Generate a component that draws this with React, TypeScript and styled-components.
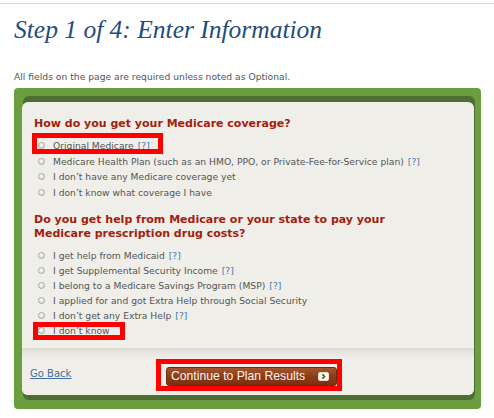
import styled, { createGlobalStyle } from 'styled-components';

const GlobalStyle = createGlobalStyle`
  html, body {
    margin: 0;
    padding: 0;
    background: #fff;
  }
`;

const TopRule = styled.div`
  margin-top: 3px;
  height: 1px;
  background: #dadada;
`;

const Page = styled.div`
  padding: 0 13px 0 14px;
  font-family: 'DejaVu Sans', Verdana, sans-serif;
`;

const Title = styled.h1`
  margin: 11px 0 0;
  font-family: 'Liberation Serif', Georgia, serif;
  font-style: italic;
  font-weight: normal;
  font-size: 25.5px;
  line-height: 30px;
  color: #1f4d7b;
`;

const Note = styled.p`
  margin: 26px 0 5px;
  font-size: 9.2px;
  line-height: 12px;
  color: #555;
`;

const Frame = styled.div`
  width: 467px;
  box-sizing: border-box;
  padding: 8px 7px 14px 8px;
  background: #6a9e3e;
  border-radius: 4px;
`;

const Panel = styled.div`
  margin-top: 6px;
  background: #efeee8;
  border-radius: 6px;
  box-shadow: 1px -6px 0 #4c6e32, 1px 5px 0 #4c6e32;
`;

const Body = styled.div`
  padding: 15px 12px 10px;
`;

const Question = styled.h2<{ $gap?: number }>`
  margin: ${({ $gap = 0 }) => $gap}px 0 0;
  font-size: 11px;
  line-height: 14px;
  font-weight: bold;
  color: #a21e0e;
`;

const Options = styled.ul<{ $row: number }>`
  margin: 7px 0 0;
  padding: 0 0 0 4px;
  list-style: none;

  li {
    height: ${({ $row }) => $row}px;
    line-height: ${({ $row }) => $row}px;
  }
`;

const Option = styled.li`
  position: relative;
  display: flex;
  align-items: flex-start;
  font-size: 9.2px;
  color: #555;
  white-space: nowrap;
`;

const Radio = styled.span`
  flex: none;
  width: 7px;
  height: 7px;
  margin: 4px 8px 0 0;
  box-sizing: border-box;
  border: 1px solid #a8a8a6;
  border-radius: 50%;
  background: radial-gradient(circle at 40% 35%, #fbfbfb 0%, #dcdcda 70%, #c6c6c3 100%);
`;

const Help = styled.a`
  color: #4677ad;
  text-decoration: none;
  margin-left: 4px;
`;

const Highlight = styled.span<{ $top: number; $left: number; $w: number; $h: number }>`
  position: absolute;
  top: ${({ $top }) => $top}px;
  left: ${({ $left }) => $left}px;
  width: ${({ $w }) => $w}px;
  height: ${({ $h }) => $h}px;
  box-sizing: border-box;
  border: 5px solid #ff0000;
  pointer-events: none;
`;

const Footer = styled.div`
  display: grid;
  grid-template-columns: 1fr auto 1fr;
  align-items: center;
  height: 47px;
  padding: 0 1px 0 8px;
  background: linear-gradient(#dad9d1 0, #e6e5de 4px, #efeee8 10px);
  border-radius: 0 0 6px 6px;
`;

const GoBack = styled.a`
  justify-self: start;
  margin-top: 3px;
  font-size: 10px;
  color: #3f6f9e;
  text-decoration: underline;
`;

const ButtonWrap = styled.span`
  position: relative;
  display: inline-flex;
  margin-top: 9px;
`;

const ContinueButton = styled.button`
  display: flex;
  align-items: center;
  height: 19px;
  width: 171px;
  box-sizing: border-box;
  padding: 0 7px 0 4px;
  border: 1px solid #6a2a10;
  border-radius: 3px;
  background: linear-gradient(#a3552c, #8a3a18 55%, #7c3012);
  font-family: 'Liberation Sans', Arial, sans-serif;
  font-size: 12.2px;
  color: #fbf4ee;
  cursor: pointer;
`;

const ButtonIcon = styled.svg`
  margin-left: auto;
  flex: none;
`;

const q1 = [
  { text: 'Original Medicare', help: true, mark: true },
  { text: 'Medicare Health Plan (such as an HMO, PPO, or Private-Fee-for-Service plan)', help: true },
  { text: 'I don’t have any Medicare coverage yet' },
  { text: 'I don’t know what coverage I have' },
];

const q2 = [
  { text: 'I get help from Medicaid', help: true },
  { text: 'I get Supplemental Security Income', help: true },
  { text: 'I belong to a Medicare Savings Program (MSP)', help: true },
  { text: 'I applied for and got Extra Help through Social Security' },
  { text: 'I don’t get any Extra Help', help: true },
  { text: 'I don’t know', mark: true },
];

type Item = { text: string; help?: boolean; mark?: boolean };

const OptionList = ({ items, row, mark }: { items: Item[]; row: number; mark: [number, number, number, number] }) => (
  <Options $row={row}>
    {items.map((item) => (
      <Option key={item.text}>
        <Radio />
        <span>
          {item.text}
          {item.help && <Help href="#">[?]</Help>}
        </span>
        {item.mark && <Highlight $top={mark[0]} $left={mark[1]} $w={mark[2]} $h={mark[3]} />}
      </Option>
    ))}
  </Options>
);

export default function App() {
  return (
    <>
      <GlobalStyle />
      <TopRule />
      <Page>
        <Title>Step 1 of 4: Enter Information</Title>
        <Note>All fields on the page are required unless noted as Optional.</Note>
        <Frame>
          <Panel>
            <Body>
              <Question>How do you get your Medicare coverage?</Question>
              <OptionList items={q1} row={15.5} mark={[-5, -6, 131, 21]} />
              <Question $gap={13}>
                Do you get help from Medicare or your state to pay your
                <br />
                Medicare prescription drug costs?
              </Question>
              <OptionList items={q2} row={15} mark={[-1, -5, 92, 18]} />
            </Body>
            <Footer>
              <GoBack href="#">Go Back</GoBack>
              <ButtonWrap>
                <ContinueButton type="button">
                  Continue to Plan Results
                  <ButtonIcon width="11" height="9" viewBox="0 0 11 9">
                    <rect x="0.5" y="0.5" width="10" height="8" rx="1.5" fill="#fbf7f2" stroke="#e9dccf" />
                    <path d="M4.3 2.4 L6.6 4.5 L4.3 6.6" fill="none" stroke="#3d6a2a" strokeWidth="1.6" />
                  </ButtonIcon>
                </ContinueButton>
                <Highlight $top={-8} $left={-10} $w={186} $h={32} />
              </ButtonWrap>
              <span />
            </Footer>
          </Panel>
        </Frame>
      </Page>
    </>
  );
}
